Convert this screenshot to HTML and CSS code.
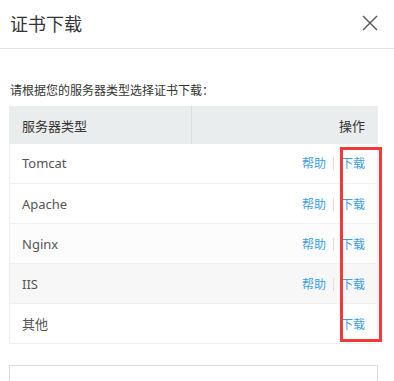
FILE: index.html
```html
<!DOCTYPE html>
<html>
<head>
<meta charset="utf-8">
<title>证书下载</title>
<link rel="stylesheet" href="styles.css">
</head>
<body>
<div class="dialog">
  <div class="dialog-head">
    <h3>证书下载</h3>
    <span class="close">
      <svg width="16" height="16" viewBox="0 0 16 16"><path d="M1 1 L15 15 M15 1 L1 15" stroke="#555" stroke-width="1.4" fill="none"/></svg>
    </span>
  </div>
  <div class="dialog-body">
    <p class="tip">请根据您的服务器类型选择证书下载：</p>
    <div class="table-wrap">
      <table class="cert-table">
        <thead>
          <tr><th class="col-type">服务器类型</th><th class="col-op">操作</th></tr>
        </thead>
        <tbody>
          <tr><td>Tomcat</td><td class="ops"><a href="#">帮助</a><span class="sep"></span><a href="#">下载</a></td></tr>
          <tr><td>Apache</td><td class="ops"><a href="#">帮助</a><span class="sep"></span><a href="#">下载</a></td></tr>
          <tr class="light"><td>Nginx</td><td class="ops"><a href="#">帮助</a><span class="sep"></span><a href="#">下载</a></td></tr>
          <tr class="hover"><td>IIS</td><td class="ops"><a href="#">帮助</a><span class="sep"></span><a href="#">下载</a></td></tr>
          <tr><td>其他</td><td class="ops"><a href="#">下载</a></td></tr>
        </tbody>
      </table>
      <div class="mark"></div>
    </div>
    <div class="next-box"></div>
  </div>
</div>
</body>
</html>
```

FILE: styles.css
```css
body {
  margin: 0;
  padding: 0;
  background-color: #fff;
  font-family: "Noto Sans", "Noto Sans CJK SC", sans-serif;
  color: #333;
  overflow: hidden;
}
.dialog {
  width: 394px;
}
.dialog-head {
  height: 48px;
  border-bottom: 1px solid #e5e5e5;
  display: flex;
  align-items: center;
  justify-content: space-between;
  padding: 0 16px 0 10px;
}
.dialog-head h3 {
  margin: 0;
  font-size: 18px;
  font-weight: normal;
  color: #333;
  position: relative;
  top: -1px;
}
.close {
  width: 16px;
  height: 16px;
  display: block;
  position: relative;
  top: -1px;
}
.close svg {
  display: block;
}
.dialog-body {
  padding: 32px 16px 0 9px;
}
.tip {
  margin: 0 0 5px 1px;
  font-size: 12px;
  line-height: 20px;
  color: #333;
}
.table-wrap {
  position: relative;
}
.cert-table {
  width: 369px;
  border-collapse: collapse;
  border: 1px solid #eeeeee;
  font-size: 13px;
}
.cert-table th {
  height: 37px;
  padding: 0 12px;
  background-color: #eaeded;
  font-weight: normal;
  color: #333;
  box-sizing: border-box;
}
.col-type {
  width: 182px;
  text-align: left;
  border-right: 1px solid #d9dddd;
}
.col-op {
  text-align: right;
}
.cert-table td {
  height: 40px;
  padding: 0 12px;
  border-bottom: 1px solid #f0f0f0;
  color: #555;
  box-sizing: border-box;
}
.cert-table tr.light td {
  background-color: #fcfcfc;
}
.cert-table tr.hover td {
  background-color: #f7f7f7;
}
.ops {
  text-align: right;
  font-size: 12px;
}
.ops a {
  color: #3aa0e6;
  text-decoration: none;
}
.sep {
  display: inline-block;
  width: 1px;
  height: 13px;
  background-color: #dddddd;
  margin: 0 7px 0 7px;
  vertical-align: -2px;
}
.mark {
  position: absolute;
  left: 331px;
  top: 41px;
  width: 36px;
  height: 189px;
  border: 3px solid #f23a3a;
}
.next-box {
  margin-top: 21px;
  width: 367px;
  height: 20px;
  border: 1px solid #dddddd;
}
```
